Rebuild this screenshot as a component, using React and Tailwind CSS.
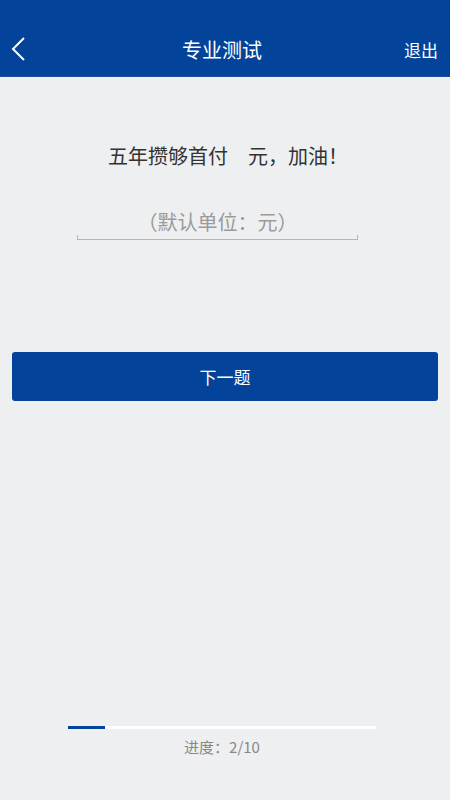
export default function App() {
  const current = 2;
  const total = 10;

  return (
    <div
      className="w-[450px] h-[800px] bg-[#eeeff1] flex flex-col"
      style={{ fontFamily: '"Noto Sans CJK SC", "Noto Sans", sans-serif' }}
    >
      {/* Header */}
      <div className="h-[77px] bg-[#03439a] flex items-end pb-[13px] pl-[10px] pr-[12px] relative border-b border-[#1b4f9c]">
        <svg width="16" height="26" viewBox="0 0 16 26" className="mb-[1px]">
          <path d="M14 2 L3 13 L14 24" fill="none" stroke="white" strokeWidth="2" />
        </svg>
        <div className="flex-1 text-center text-white text-[20px] leading-[26px] pl-[14px]">专业测试</div>
        <div className="text-white text-[17px] leading-[26px]">退出</div>
      </div>

      {/* Question */}
      <div className="pt-[65px] text-center text-[#333333] text-[20px] leading-[28px] pl-[6px]">
        五年攒够首付　元，加油！
      </div>

      <div className="mt-[38px] ml-[77px] w-[281px]">
        <div className="text-center text-[#9a9a9a] text-[20px] leading-[28px]">（默认单位：元）</div>
        <div className="h-[5px] border-l border-r border-b border-[#b5b5b5] -mt-[1px]" />
      </div>

      {/* Next button */}
      <div className="px-[12px] mt-[112px]">
        <button className="w-full h-[49px] bg-[#03439a] rounded-[3px] text-white text-[17px]">下一题</button>
      </div>

      <div className="flex-1" />

      {/* Progress */}
      <div className="flex flex-col pb-[42px]">
        <div className="ml-[68px] w-[308px] h-[3px] bg-white">
          <div className="h-full bg-[#03439a]" style={{ width: `${(37 / 308) * 100 * (current / 2)}%` }} />
        </div>
        <div className="ml-[68px] w-[308px] text-center mt-[7px] text-[#888888] text-[15px] leading-[22px]">
          进度：{current}/{total}
        </div>
      </div>
    </div>
  );
}
